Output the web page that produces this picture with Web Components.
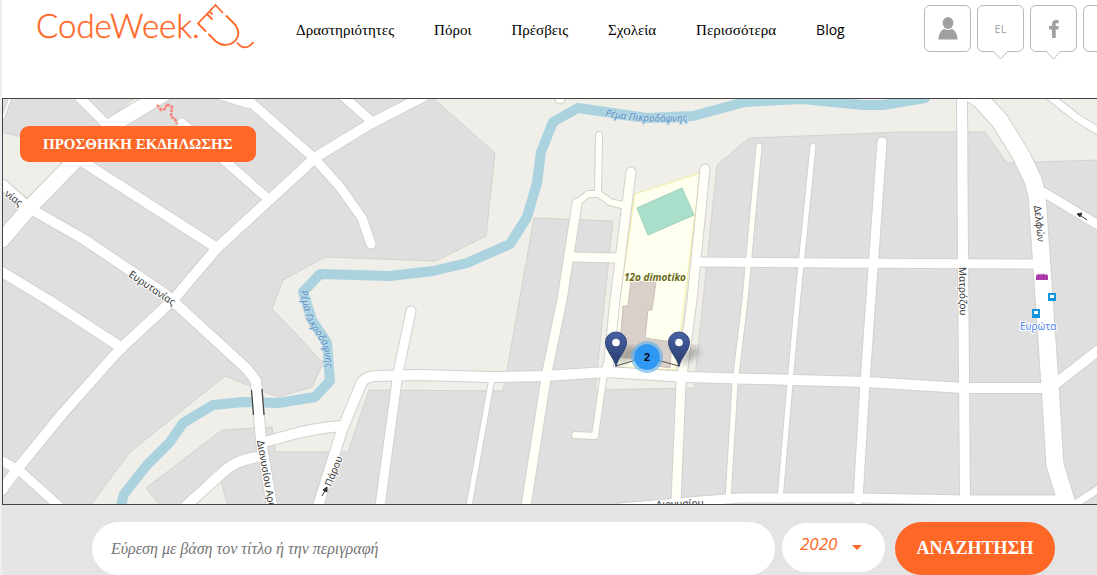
<!DOCTYPE html>
<html lang="el">
<head>
<meta charset="utf-8">
<meta name="viewport" content="width=device-width, initial-scale=1">
<title>CodeWeek</title>
<style>
  body {
    margin: 0;
    padding-left: 2px;
    min-height: 100vh;
    box-sizing: border-box;
    display: flex;
    flex-direction: column;
    overflow-x: hidden;
    background: #eee;
    font-family: "Liberation Serif", serif;
  }
  search-bar { flex: 1; }
</style>
</head>
<body>
<site-header>
  <nav-link href="#activities">Δραστηριότητες</nav-link>
  <nav-link href="#resources">Πόροι</nav-link>
  <nav-link href="#ambassadors">Πρέσβεις</nav-link>
  <nav-link href="#schools">Σχολεία</nav-link>
  <nav-link href="#more">Περισσότερα</nav-link>
  <nav-link href="#blog" class="latin">Blog</nav-link>
  <icon-tile slot="tools" label="Λογαριασμός">
    <svg width="20" height="23" viewBox="0 0 20 23" fill="#a0a0a0"><ellipse cx="10" cy="6" rx="5.4" ry="6"/><path d="M.5 22.5c0-6 3-10 6-10.500q3.500 2 7 0c3 .5 6 4.500 6 10.500z"/></svg>
  </icon-tile>
  <icon-tile slot="tools" label="Γλώσσα" tail>EL</icon-tile>
  <icon-tile slot="tools" label="Facebook" tail>
    <svg width="10" height="18" viewBox="0 0 10 18" fill="#a0a0a0"><path d="M3 18V9.500H0V6h3V4.500C3 1.500 4.500 0 7 0h2.500v3.200H8C7 3.200 6.700 3.700 6.700 4.600V6h3l-.4 3.500H6.700V18z"/></svg>
  </icon-tile>
  <icon-tile slot="tools" label="Twitter" tail></icon-tile>
</site-header>
<event-map>
  <a slot="action" href="#add">ΠΡΟΣΘΗΚΗ ΕΚΔΗΛΩΣΗΣ</a>
</event-map>
<search-bar placeholder="Εύρεση με βάση τον τίτλο ή την περιγραφή" year="2020">ΑΝΑΖΗΤΗΣΗ</search-bar>

<script>
class CodeweekLogo extends HTMLElement {
  constructor() {
    super();
    this.attachShadow({ mode: "open" });
    this.shadowRoot.innerHTML = `
      <style>
        :host { display: block; }
        a { display: block; }
        svg { display: block; }
        text { font: 300 33px Lato, sans-serif; fill: #ff6726; stroke: #ff6726; stroke-width: .4px; }
        path { fill: none; stroke: #ff6726; stroke-width: 1.800; }
      </style>
      <a href="#home" aria-label="CodeWeek">
        <svg width="218" height="50" viewBox="37 0 218 50">
          <text x="36" y="38">CodeWeek.</text>
          <path d="M223 13L215.500 5 198 23.500 206 31.500M207 14l5.500 5.500M212.500 14.500l-3-3M208.500 34L216 41.500C228 51 243 39 237 28Q236 25.500 234 23.500L226 15.500M237 42.500q8 10 16.500-.5"/>
        </svg>
      </a>
    `;
  }
}

class NavLink extends HTMLElement {
  constructor() {
    super();
    this.attachShadow({ mode: "open" });
  }

  connectedCallback() {
    this.shadowRoot.innerHTML = `
      <style>
        :host { display: block; font-size: 15px; line-height: 20px; }
        :host(.latin) { font: 14px/20px "Open Sans", sans-serif; }
        a { color: #000; text-decoration: none; white-space: nowrap; }
      </style>
      <a href="${this.getAttribute("href")}"><slot></slot></a>
    `;
  }
}

class IconTile extends HTMLElement {
  constructor() {
    super();
    this.attachShadow({ mode: "open" });
  }

  connectedCallback() {
    const tail = this.hasAttribute("tail")
      ? `<svg class="tail" width="17" height="10" viewBox="0 0 17 10"><path d="M1 0L8.500 8 16 0" fill="#fff" stroke="#b8b8b8"/></svg>`
      : "";
    this.shadowRoot.innerHTML = `
      <style>
        :host { display: block; position: relative; }
        button {
          display: flex;
          align-items: center;
          justify-content: center;
          width: 47px;
          height: 47px;
          padding: 0;
          border: 1px solid #b8b8b8;
          border-radius: 6px;
          background: #fff;
          color: #a0a0a0;
          font: 11px "Open Sans", sans-serif;
        }
        .tail { position: absolute; left: 15px; bottom: -9px; }
      </style>
      <button type="button" aria-label="${this.getAttribute("label")}"><slot></slot></button>${tail}
    `;
  }
}

class SiteHeader extends HTMLElement {
  constructor() {
    super();
    this.attachShadow({ mode: "open" });
    this.shadowRoot.innerHTML = `
      <style>
        :host { display: block; background: #fff; overflow: hidden; }
        header {
          display: flex;
          align-items: flex-start;
          height: 98px;
          padding-left: 35px;
        }
        nav { display: flex; gap: 40px; padding: 20px 0 0 41px; }
        .tools {
          display: flex;
          flex-shrink: 0;
          gap: 6px;
          margin-left: auto;
          margin-right: -33px;
          padding-top: 5px;
        }
      </style>
      <header>
        <codeweek-logo></codeweek-logo>
        <nav><slot></slot></nav>
        <div class="tools"><slot name="tools"></slot></div>
      </header>
    `;
  }
}

class MapPin extends HTMLElement {
  constructor() {
    super();
    this.attachShadow({ mode: "open" });
    this.shadowRoot.innerHTML = `
      <style>
        :host { display: block; width: 24px; height: 36px; }
        button { display: block; padding: 0; border: 0; background: none; }
        svg { display: block; overflow: visible; }
      </style>
      <button type="button" aria-label="Εκδήλωση">
        <svg width="24" height="36" viewBox="0 0 24 36">
          <defs>
            <linearGradient id="g" x2="0" y2="1"><stop stop-color="#4762a3"/><stop offset="1" stop-color="#2b3a6c"/></linearGradient>
            <filter id="b" x="-50%" width="200%"><feGaussianBlur stdDeviation="3"/></filter>
          </defs>
          <path d="M12 35L20 19Q28 12 32 19 32 27 12 35z" fill="#333" opacity=".35" filter="url(#b)"/>
          <path d="M12 35.500C10.500 27 1.500 20 1.500 11a10.500 10 0 0 1 21 0C22.500 20 13.500 27 12 35.500z" fill="url(#g)" stroke="#31447c"/>
          <circle cx="12" cy="11.500" r="3.800" fill="#fff"/>
        </svg>
      </button>
    `;
  }
}

const WHITE = "#fff";
const CREAM = "#fffff7";

// [path, width, colour]
const ROADS = [
  ["M3 118L10 99", 2, WHITE],
  ["M80 98L104 122", 9, WHITE],
  ["M80 160L217 248", 10, WHITE],
  ["M182 123L267 198", 9, WHITE],
  ["M3 185L30 209 38 213 85 240 165 294 175 303 247 369 256 381 261 440 272 506", 10, WHITE],
  ["M2 272L50 301 122 348", 10, WHITE],
  ["M2 461L20 471 59 506", 9, WHITE],
  ["M212 93L248 104", 8, WHITE],
  ["M242 94L256 107 314 158 340 187 362 218 371 244", 9, WHITE],
  ["M344 97L370 120", 9, WHITE],
  ["M424 96L370 124 316 157 217 248 173 300 120 349 63 413 18 468 2 490", 10, WHITE],
  ["M261 457Q237 458 220 475L186 506", 10, WHITE],
  ["M261 443L290 435Q315 428 342 426", 10, WHITE],
  ["M411 311L398 373 380 506", 9, WHITE],
  ["M492 378L469 506", 5, WHITE],
  ["M599 135L598 194", 6, CREAM],
  ["M577 203L588 194H599L610 202 622 205", 6, CREAM],
  ["M577 203L562 300 547 372 526 506", 9, CREAM],
  ["M573 257L616 258", 9, CREAM],
  ["M606 365L603 380 595 436 575 435", 6, CREAM],
  ["M631 172L615 300 608 370", 9, CREAM],
  ["M705 169L692 300 681 383 676 502", 9, CREAM],
  ["M759 146L745 300 735 383 728 500", 5, CREAM],
  ["M813 146L798 295 790 383 780 500", 5, WHITE],
  ["M882 142L874 255 865 382 858 500", 9, WHITE],
  ["M962 96L963 255 965 500", 10, WHITE],
  ["M698 262L830 263 1036 264", 9, WHITE],
  ["M318 506L342 430 361 384Q364 377 375 376L420 375 490 377 545 376 607 372 687 377 830 381 867 382 963 388H1050L1100 349", 10, WHITE],
  ["M620 508L700 501 740 498 860 498 965 500H1070", 9, WHITE],
  ["M1043 192L1100 226", 9, WHITE],
  ["M1048 95L1077 118 1100 132", 7, WHITE],
  ["M1066 510L1100 488", 7, WHITE],
];

const MAIN_ROADS = [
  ["M170 90L112 125 72 164 30 207 2 240", 15, WHITE],
  ["M972 94L980 99 1000 121 1021 155 1033 180 1037 195 1050 385 1055 465 1069 510", 17, WHITE],
];

const RIVER = "M121 506L124 494 147 465 170 442 183 423 213 405 243 402 278 403 315 397 330 381 327 343 312 320 303 292 320 274 390 276 433 271 467 263 510 244 527 217 537 183 541 152 553 122 578 108 647 118 693 116 745 102 802 99 863 105 883 105 925 98";

class EventMap extends HTMLElement {
  constructor() {
    super();
    this.attachShadow({ mode: "open" });
    this.shadowRoot.innerHTML = `
      <style>
        :host { display: block; position: relative; border: 1px solid #444; border-right: 0; overflow: hidden; }
        svg.tiles { display: block; width: 100%; height: 405px; }
        .edge, .line { fill: none; stroke-linecap: round; stroke-linejoin: round; }
        .area { fill: #f0eee8; stroke: #d5d2cc; }
        text { font: 10px "Noto Sans", sans-serif; fill: #333; stroke: #fff; stroke-width: 2px; paint-order: stroke; }
        .water { fill: #5e8fc9; stroke: #b9dbe6; font-style: italic; }
        .school { font-weight: 700; font-style: italic; fill: #6b6b1e; stroke: #fffff0; }
        .stop { fill: #4c86ef; }
        ::slotted(a) {
          position: absolute;
          left: 17px;
          top: 27px;
          padding: 0 23px;
          border-radius: 9px;
          background: #ff6726;
          color: #fff;
          font-weight: 700;
          font-size: 15px;
          line-height: 36px;
          text-decoration: none;
          white-space: nowrap;
        }
        map-pin, .cluster { position: absolute; transform: translate(-50%, -100%); }
        .cluster {
          transform: translate(-50%, -50%);
          width: 32px;
          height: 32px;
          padding: 0;
          border: 3px solid rgba(90, 175, 235, .6);
          border-radius: 50%;
          background: #2f98f3;
          background-clip: padding-box;
          color: #000;
          font: 700 11px "Liberation Sans", sans-serif;
        }
      </style>
      <svg class="tiles" viewBox="3 99 1094 405" preserveAspectRatio="xMidYMid slice">
        <rect x="3" y="99" width="1094" height="405" fill="#e0dfdf"/>
        <g class="area">
          <path d="M433 98L495 153 486 236 436 261 325 257 283 280 272 309 300 338 323 363 312 387 278 397 225 376 130 452 90 506H161L146 488 222 430 272 427 275 452H348L369 390 503 391 507 370 534 218 613 221 595 390 694 388 717 165 749 138 830 135 900 132H985L1007 163 1100 160V98z"/>
          <path d="M2 132L22 137 62 163 27 198 2 178zM2 224L17 212 28 218 2 252z"/>
          <path d="M104 122L135 98H142L110 126zM180 506L217 467 228 506z"/>
        </g>
        <path d="M635 194L700 173 676 370 610 367z" fill="#fffff0" stroke="#f3efa0"/>
        <path d="M631 281L656 282 652 310H648L645 338 672 342 670 368 650 365 628 358 619 357 623 306H628z" fill="#d9d0c9" stroke="#cbc0b7"/>
        <path d="M637 208L682 188 694 215 648 235z" fill="#aae0cb" stroke="#9ccfb9"/>
        <path class="line" d="${RIVER}" stroke="#aad3df" stroke-width="10"/>
        <circle cx="560" cy="99" r="5" fill="#fffff7" stroke="#cfcbc6"/>
        <g class="roads"></g>
        <path d="M157 105L161 110 165 109 167 104 172 107 171 117 175 119 177 124" fill="none" stroke="#f88379" stroke-width="2.500" stroke-dasharray="3 1"/>
        <path d="M251.500 390L253.500 415M262 389L264 415" stroke="#444" stroke-width="1.300"/>
        <path d="M616 366L646 357 679 366" fill="none" stroke="#555"/>
        <g fill="#333" stroke="#333"><path d="M322 496L327 487M327 487l-4 3 4 2zM1087 220L1080 215M1077 214l5-1-2 4z"/></g>
        <path d="M1036 280v-4q1-3 2-1 1-3 2 0 1-3 2 0 2-3 3 0 2-2 3 1v4z" fill="#ac39ac"/>
        <g fill="#1296db"><path d="M1048 293h8v8h-8zM1032 309h8v9h-8z"/><path d="M1050 295h4v3h-4zM1034 311h4v3h-4z" fill="#fff"/></g>
        <defs>
          <path id="stream-top" d="M605 116Q650 125 700 120"/>
          <path id="stream-left" d="M300 291L306 318 322 344Q328 360 325 390"/>
        </defs>
        <text class="water" font-size="11"><textPath href="#stream-top">Ρέμα Πικροδάφνης</textPath></text>
        <text class="water"><textPath href="#stream-left">Ρέμα Πικροδάφνης</textPath></text>
        <text transform="translate(128 276) rotate(34)">Ευρυτανίας</text>
        <text transform="translate(4 195) rotate(38)">νίας</text>
        <text transform="translate(257 441) rotate(80)">Διονυσίου Αρε</text>
        <text transform="translate(331 487) rotate(-68)">Πάρου</text>
        <text transform="translate(1034 206) rotate(84)">Δελφών</text>
        <text transform="translate(959 267) rotate(89)">Ματρόζου</text>
        <text transform="translate(656 508) rotate(-2)">Διονυσίου</text>
        <text class="school" x="624" y="281">12ο dimotiko</text>
        <text class="stop" x="1020" y="330">Ευρώτα</text>
      </svg>
      <map-pin></map-pin>
      <map-pin></map-pin>
      <button class="cluster" type="button" aria-label="2 εκδηλώσεις">2</button>
      <slot name="action"></slot>
    `;
    this.drawRoads();
    this.placeMarkers();
  }

  drawRoads() {
    const stroke = (cls, grow, colour) => ([d, width, fill]) =>
      `<path class="${cls}" d="${d}" stroke="${colour || fill}" stroke-width="${width + grow}"/>`;
    const all = [...ROADS, ...MAIN_ROADS];
    // casings first, so the junctions stay open
    const edges = all.map(stroke("edge", 2, "#d3d0ce")).join("");
    const fills = all.map(stroke("line", 0)).join("");
    this.shadowRoot.querySelector(".roads").outerHTML = `<g>${edges}${fills}</g>`;
  }

  placeMarkers() {
    const place = (el, x, y) => {
      el.style.left = `${((x - 3) / 1094) * 100}%`;
      el.style.top = `${((y - 99) / 405) * 100}%`;
    };
    const pins = this.shadowRoot.querySelectorAll("map-pin");
    place(pins[0], 616, 367);
    place(pins[1], 679, 367);
    place(this.shadowRoot.querySelector(".cluster"), 647, 357);
  }
}

class SearchBar extends HTMLElement {
  constructor() {
    super();
    this.attachShadow({ mode: "open" });
  }

  connectedCallback() {
    this.shadowRoot.innerHTML = `
      <style>
        :host { display: block; background: #e4e4e4; }
        form { display: flex; align-items: flex-start; padding: 17px 42px 0 90px; }
        input, select, button { box-sizing: border-box; margin: 0; border: 0; outline: 0; }
        input {
          flex: 1;
          min-width: 0;
          height: 53px;
          padding: 0 19px;
          border-radius: 27px;
          background: #fff;
          font: italic 16px "Liberation Serif", serif;
        }
        input::placeholder { color: #757575; }
        .year { position: relative; margin: 1px 10px 0 7px; }
        .year::after {
          content: "";
          position: absolute;
          right: 23px;
          top: 22px;
          border: 5px solid transparent;
          border-top-color: #ff6726;
          border-bottom: 0;
        }
        select {
          display: block;
          appearance: none;
          width: 103px;
          height: 49px;
          padding: 0 18px 8px;
          border-radius: 25px;
          background: #fff;
          color: #ff6726;
          font: italic 500 17px "Open Sans", sans-serif;
        }
        button {
          height: 53px;
          width: 160px;
          border-radius: 27px;
          background: #ff6726;
          color: #fff;
          font: 700 18px "Liberation Serif", serif;
        }
      </style>
      <form onsubmit="return false">
        <input type="text" aria-label="Αναζήτηση" placeholder="${this.getAttribute("placeholder")}">
        <div class="year">
          <select aria-label="Έτος"><option>${this.getAttribute("year")}</option></select>
        </div>
        <button><slot></slot></button>
      </form>
    `;
  }
}

customElements.define("codeweek-logo", CodeweekLogo);
customElements.define("nav-link", NavLink);
customElements.define("icon-tile", IconTile);
customElements.define("site-header", SiteHeader);
customElements.define("map-pin", MapPin);
customElements.define("event-map", EventMap);
customElements.define("search-bar", SearchBar);
</script>
</body>
</html>
